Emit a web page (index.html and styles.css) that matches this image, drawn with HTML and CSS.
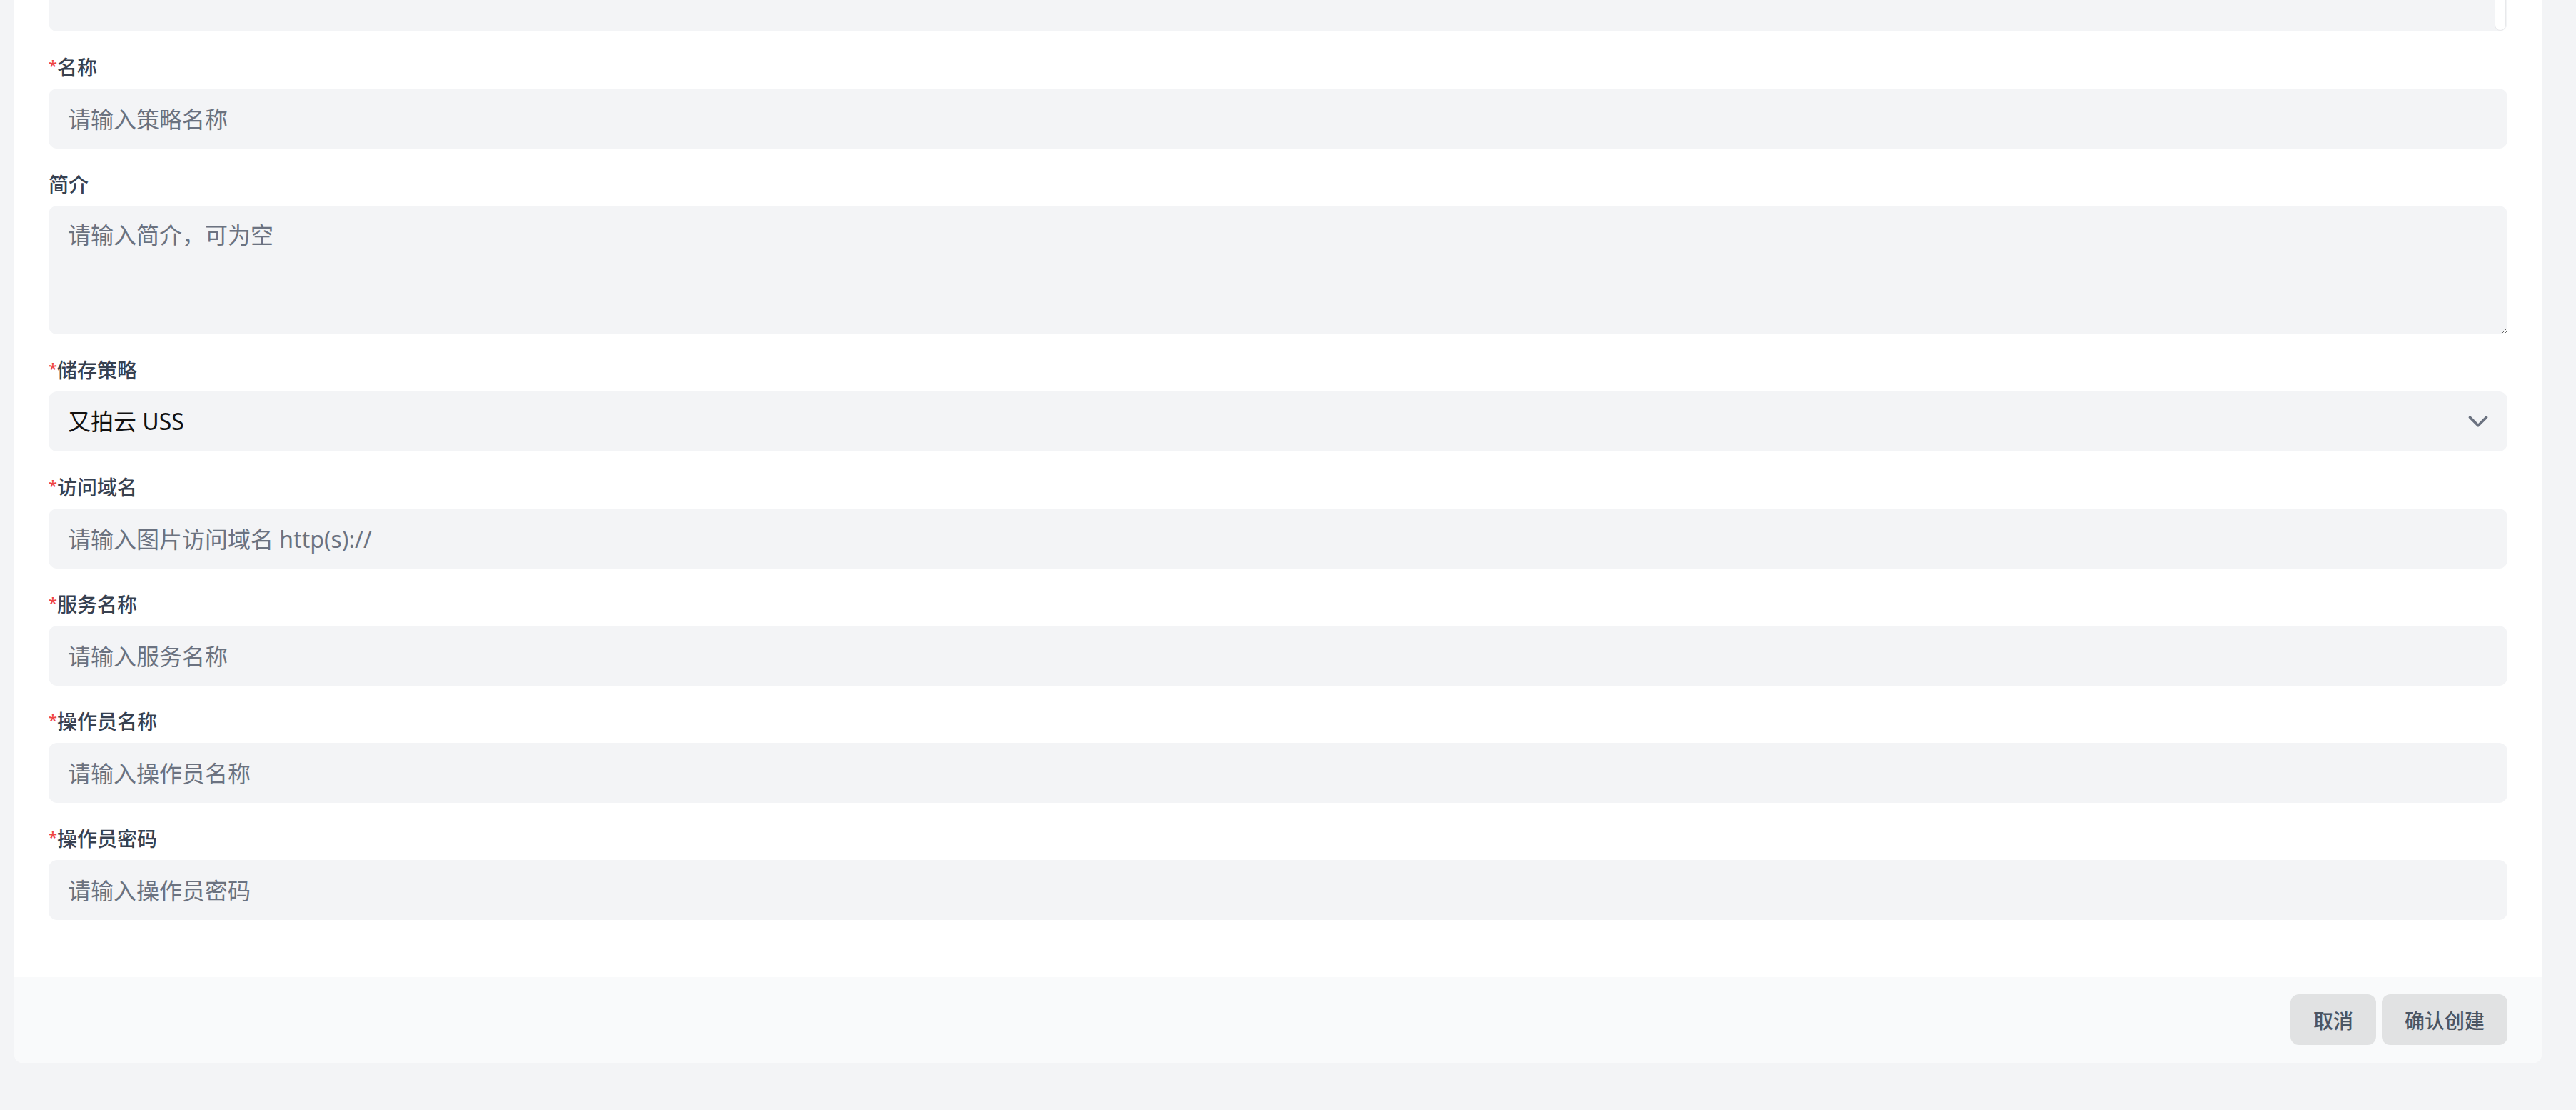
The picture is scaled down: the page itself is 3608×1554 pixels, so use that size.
FILE: index.html
```html
<!DOCTYPE html>
<html lang="zh-CN">
<head>
    <meta charset="UTF-8">
    <meta name="viewport" content="width=device-width, initial-scale=1.0">
    <title>创建储存策略</title>
    <link rel="stylesheet" href="styles.css">
</head>
<body>
    <div class="card">
        <form class="card-body">
            <div class="field">
                <div class="editor">
                    <span class="thumb"></span>
                </div>
            </div>
            <div class="field">
                <label for="name"><span class="req">*</span>名称</label>
                <input id="name" type="text" placeholder="请输入策略名称">
            </div>
            <div class="field">
                <label for="intro">简介</label>
                <textarea id="intro" placeholder="请输入简介，可为空"></textarea>
            </div>
            <div class="field">
                <label for="driver"><span class="req">*</span>储存策略</label>
                <div class="select-wrap">
                    <select id="driver">
                        <option>又拍云 USS</option>
                    </select>
                    <svg class="chevron" viewBox="0 0 24 24" fill="none" stroke="currentColor" stroke-width="2" stroke-linecap="round" stroke-linejoin="round">
                        <path d="M6 9l6 6 6-6"/>
                    </svg>
                </div>
            </div>
            <div class="field">
                <label for="domain"><span class="req">*</span>访问域名</label>
                <input id="domain" type="text" placeholder="请输入图片访问域名 http(s)://">
            </div>
            <div class="field">
                <label for="service"><span class="req">*</span>服务名称</label>
                <input id="service" type="text" placeholder="请输入服务名称">
            </div>
            <div class="field">
                <label for="operator"><span class="req">*</span>操作员名称</label>
                <input id="operator" type="text" placeholder="请输入操作员名称">
            </div>
            <div class="field">
                <label for="password"><span class="req">*</span>操作员密码</label>
                <input id="password" type="text" placeholder="请输入操作员密码">
            </div>
        </form>
        <div class="card-footer">
            <button type="button">取消</button>
            <button type="button">确认创建</button>
        </div>
    </div>
</body>
</html>
```

FILE: styles.css
```css
*,
*:before,
*:after {
    padding: 0;
    margin: 0;
    box-sizing: border-box;
}

body {
    font-family: "Noto Sans", "Noto Sans CJK SC", sans-serif;
    background-color: #f3f4f6;
    height: 100vh;
    overflow: hidden;
}

/* page is scrolled: the card starts above the viewport */
.card {
    margin: -200px 48px 0 20px;
    background-color: #fff;
    border-radius: 12px;
    overflow: hidden;
}

.card-body {
    display: flex;
    flex-direction: column;
    gap: 32px;
    padding: 48px 48px 80px;
}

.field {
    display: flex;
    flex-direction: column;
}

label {
    display: flex;
    align-items: flex-start;
    height: 36px;
    font-size: 28px;
    line-height: 36px;
    font-weight: 500;
    color: #374151;
    margin-bottom: 12px;
}

.req {
    color: #ef4444;
    font-size: 22px;
    line-height: 30px;
}

.editor {
    position: relative;
    height: 196px;
    background-color: #f3f4f6;
    border-radius: 12px;
}

.thumb {
    position: absolute;
    right: 2px;
    bottom: 1px;
    width: 16px;
    height: 120px;
    background-color: #fff;
    border: 1px solid #e8e9eb;
    border-radius: 8px;
}

input,
textarea,
select {
    width: 100%;
    font-family: inherit;
    font-size: 32px;
    line-height: 46px;
    color: #111;
    background-color: #f3f4f6;
    border: none;
    border-radius: 12px;
    outline: none;
}

input {
    height: 84px;
    padding: 0 27px;
}

textarea {
    height: 180px;
    padding: 18px 27px;
    resize: vertical;
}

input::placeholder,
textarea::placeholder {
    color: #6b7280;
}

.select-wrap {
    position: relative;
}

select {
    height: 84px;
    padding: 0 80px 0 27px;
    appearance: none;
}

.chevron {
    position: absolute;
    right: 18px;
    top: 19px;
    width: 46px;
    height: 46px;
    color: #6b7280;
    pointer-events: none;
}

.card-footer {
    display: flex;
    justify-content: flex-end;
    gap: 8px;
    padding: 24px 48px 25px;
    background-color: #f9fafb;
}

.card-footer button {
    height: 71px;
    padding: 0 32px;
    font-family: inherit;
    font-size: 28px;
    font-weight: 500;
    color: #4b5563;
    background-color: #e1e2e3;
    border: none;
    border-radius: 12px;
}
```
